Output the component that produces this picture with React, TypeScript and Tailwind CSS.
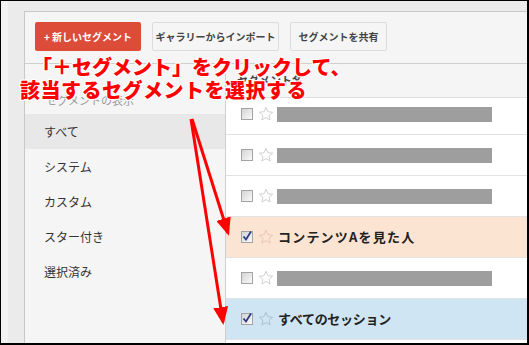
import React from 'react'

const jp = { fontFamily: '"Noto Sans CJK JP", "Noto Sans", sans-serif' }

function Checkbox({ checked }: { checked?: boolean }) {
  return (
    <div className="relative w-[12px] h-[12px] shrink-0 border border-[#a3a3a3] bg-gradient-to-br from-[#d4d4d4] to-[#fafafa]">
      {checked && (
        <svg viewBox="0 0 12 12" className="absolute -left-[1px] -top-[2px] w-[12px] h-[12px]">
          <path d="M2.5 6.5 L5 9.5 L10 1.5" fill="none" stroke="#2b3d87" strokeWidth="1.8" />
        </svg>
      )}
    </div>
  )
}

function Star({ color = '#cccccc' }: { color?: string }) {
  return (
    <svg viewBox="0 0 24 24" className="w-[16px] h-[16px] shrink-0 ml-[5px]">
      <polygon
        points="12,2 14.9,8.6 22,9.3 16.6,14 18.2,21 12,17.3 5.8,21 7.4,14 2,9.3 9.1,8.6"
        fill="none"
        stroke={color}
        strokeWidth="1.4"
      />
    </svg>
  )
}

interface RowProps {
  checked?: boolean
  label?: string
  bg?: string
  first?: boolean
  starColor?: string
  tracking?: string
}

function SegmentRow({ checked, label, bg = 'bg-white', first, starColor, tracking = '' }: RowProps) {
  return (
    <div
      className={`${bg} flex items-center pl-[15px] border-b border-[#e2e2e2] ${
        first ? 'h-[37px] pb-[4px]' : 'h-[41px]'
      }`}
    >
      <Checkbox checked={checked} />
      <Star color={starColor} />
      {label ? (
        <span className={`ml-[4px] text-[13px] font-bold text-[#222] ${tracking}`} style={jp}>
          {label}
        </span>
      ) : (
        <div className="ml-[3px] w-[215px] h-[15px] bg-[#9e9e9e]" />
      )}
    </div>
  )
}

const menu = ['すべて', 'システム', 'カスタム', 'スター付き', '選択済み']

const outline = { textShadow: '1px 1px 0 #fff, -1px -1px 0 #fff, 1px -1px 0 #fff, -1px 1px 0 #fff, 0 1px 0 #fff, 0 -1px 0 #fff' }

export default function App() {
  return (
    <div className="relative w-[529px] h-[345px] overflow-hidden border-t border-l border-r-2 border-b-2 border-black bg-[#ebebeb] flex" style={jp}>
      <div className="w-[7px] bg-[#f2f2f2]" />
      <div className="flex-1 flex flex-col">
        <div className="h-[10px]" />
        <div className="flex-1 flex">
          <div className="w-[16px]" />
          <div className="flex-1 flex flex-col bg-[#f5f5f5] border-l border-t border-[#c8c8c8]">
            <div className="flex gap-[11px] pl-[10px] pt-[10px] pb-[12px] border-b border-[#cfcfcf]">
              <button className="w-[106px] h-[29px] rounded-[2px] bg-[#dd4b39] text-white text-[10px] font-bold">
                +&nbsp;新しいセグメント
              </button>
              <button className="w-[127px] h-[29px] rounded-[2px] bg-[#f5f5f5] border border-[#dcdcdc] text-[#444] text-[10px] font-bold">
                ギャラリーからインポート
              </button>
              <button className="w-[97px] h-[29px] rounded-[2px] bg-[#f5f5f5] border border-[#dcdcdc] text-[#444] text-[10px] font-bold">
                セグメントを共有
              </button>
            </div>
            <div className="flex-1 flex">
              <div className="w-[200px] flex flex-col">
                <div className="h-[50px] flex items-end pb-[6px] pl-[21px] text-[11px] text-[#999]">
                  セグメントの表示
                </div>
                {menu.map((m, i) => (
                  <div
                    key={m}
                    className={`h-[35px] flex items-center pl-[19px] text-[12px] text-[#333] ${
                      i === 0 ? 'bg-[#e8e8e8]' : ''
                    }`}
                  >
                    {m}
                  </div>
                ))}
              </div>
              <div className="flex-1 flex flex-col bg-white border-l border-[#cfcfcf]">
                <div className="h-[34px] bg-[#f5f5f5] border-b border-[#dedede] flex items-center pl-[11px] text-[11px] font-bold text-[#444]">
                  セグメント名
                </div>
                <SegmentRow first />
                <SegmentRow />
                <SegmentRow />
                <SegmentRow checked label="コンテンツAを見た人" bg="bg-[#fce4d3]" starColor="#e8c3b4" tracking="tracking-[1.2px]" />
                <SegmentRow />
                <SegmentRow checked label="すべてのセッション" bg="bg-[#cfe5f3]" starColor="#a9bfcc" tracking="tracking-[-0.3px]" />
              </div>
            </div>
          </div>
        </div>
      </div>

      <div
        className="absolute left-[31px] top-[54px] text-[20px] leading-[23px] font-black text-[#f00] whitespace-nowrap"
        style={outline}
      >
        「＋セグメント」をクリックして、
      </div>
      <div
        className="absolute left-[19px] top-[77px] text-[20px] leading-[23px] font-black text-[#f00] whitespace-nowrap tracking-[0.5px]"
        style={outline}
      >
        該当するセグメントを選択する
      </div>

      <svg className="absolute left-0 top-0 w-[529px] h-[345px] pointer-events-none" viewBox="0 0 529 345">
        <defs>
          <marker id="ah" markerWidth="6" markerHeight="5" refX="5" refY="2.5" orient="auto" markerUnits="strokeWidth">
            <polygon points="0,0 6,2.5 0,5" fill="#f00" />
          </marker>
        </defs>
        <line x1="191" y1="118" x2="227" y2="232" stroke="#f00" strokeWidth="3" markerEnd="url(#ah)" />
        <line x1="190" y1="118" x2="222" y2="321" stroke="#f00" strokeWidth="3" markerEnd="url(#ah)" />
      </svg>
    </div>
  )
}
